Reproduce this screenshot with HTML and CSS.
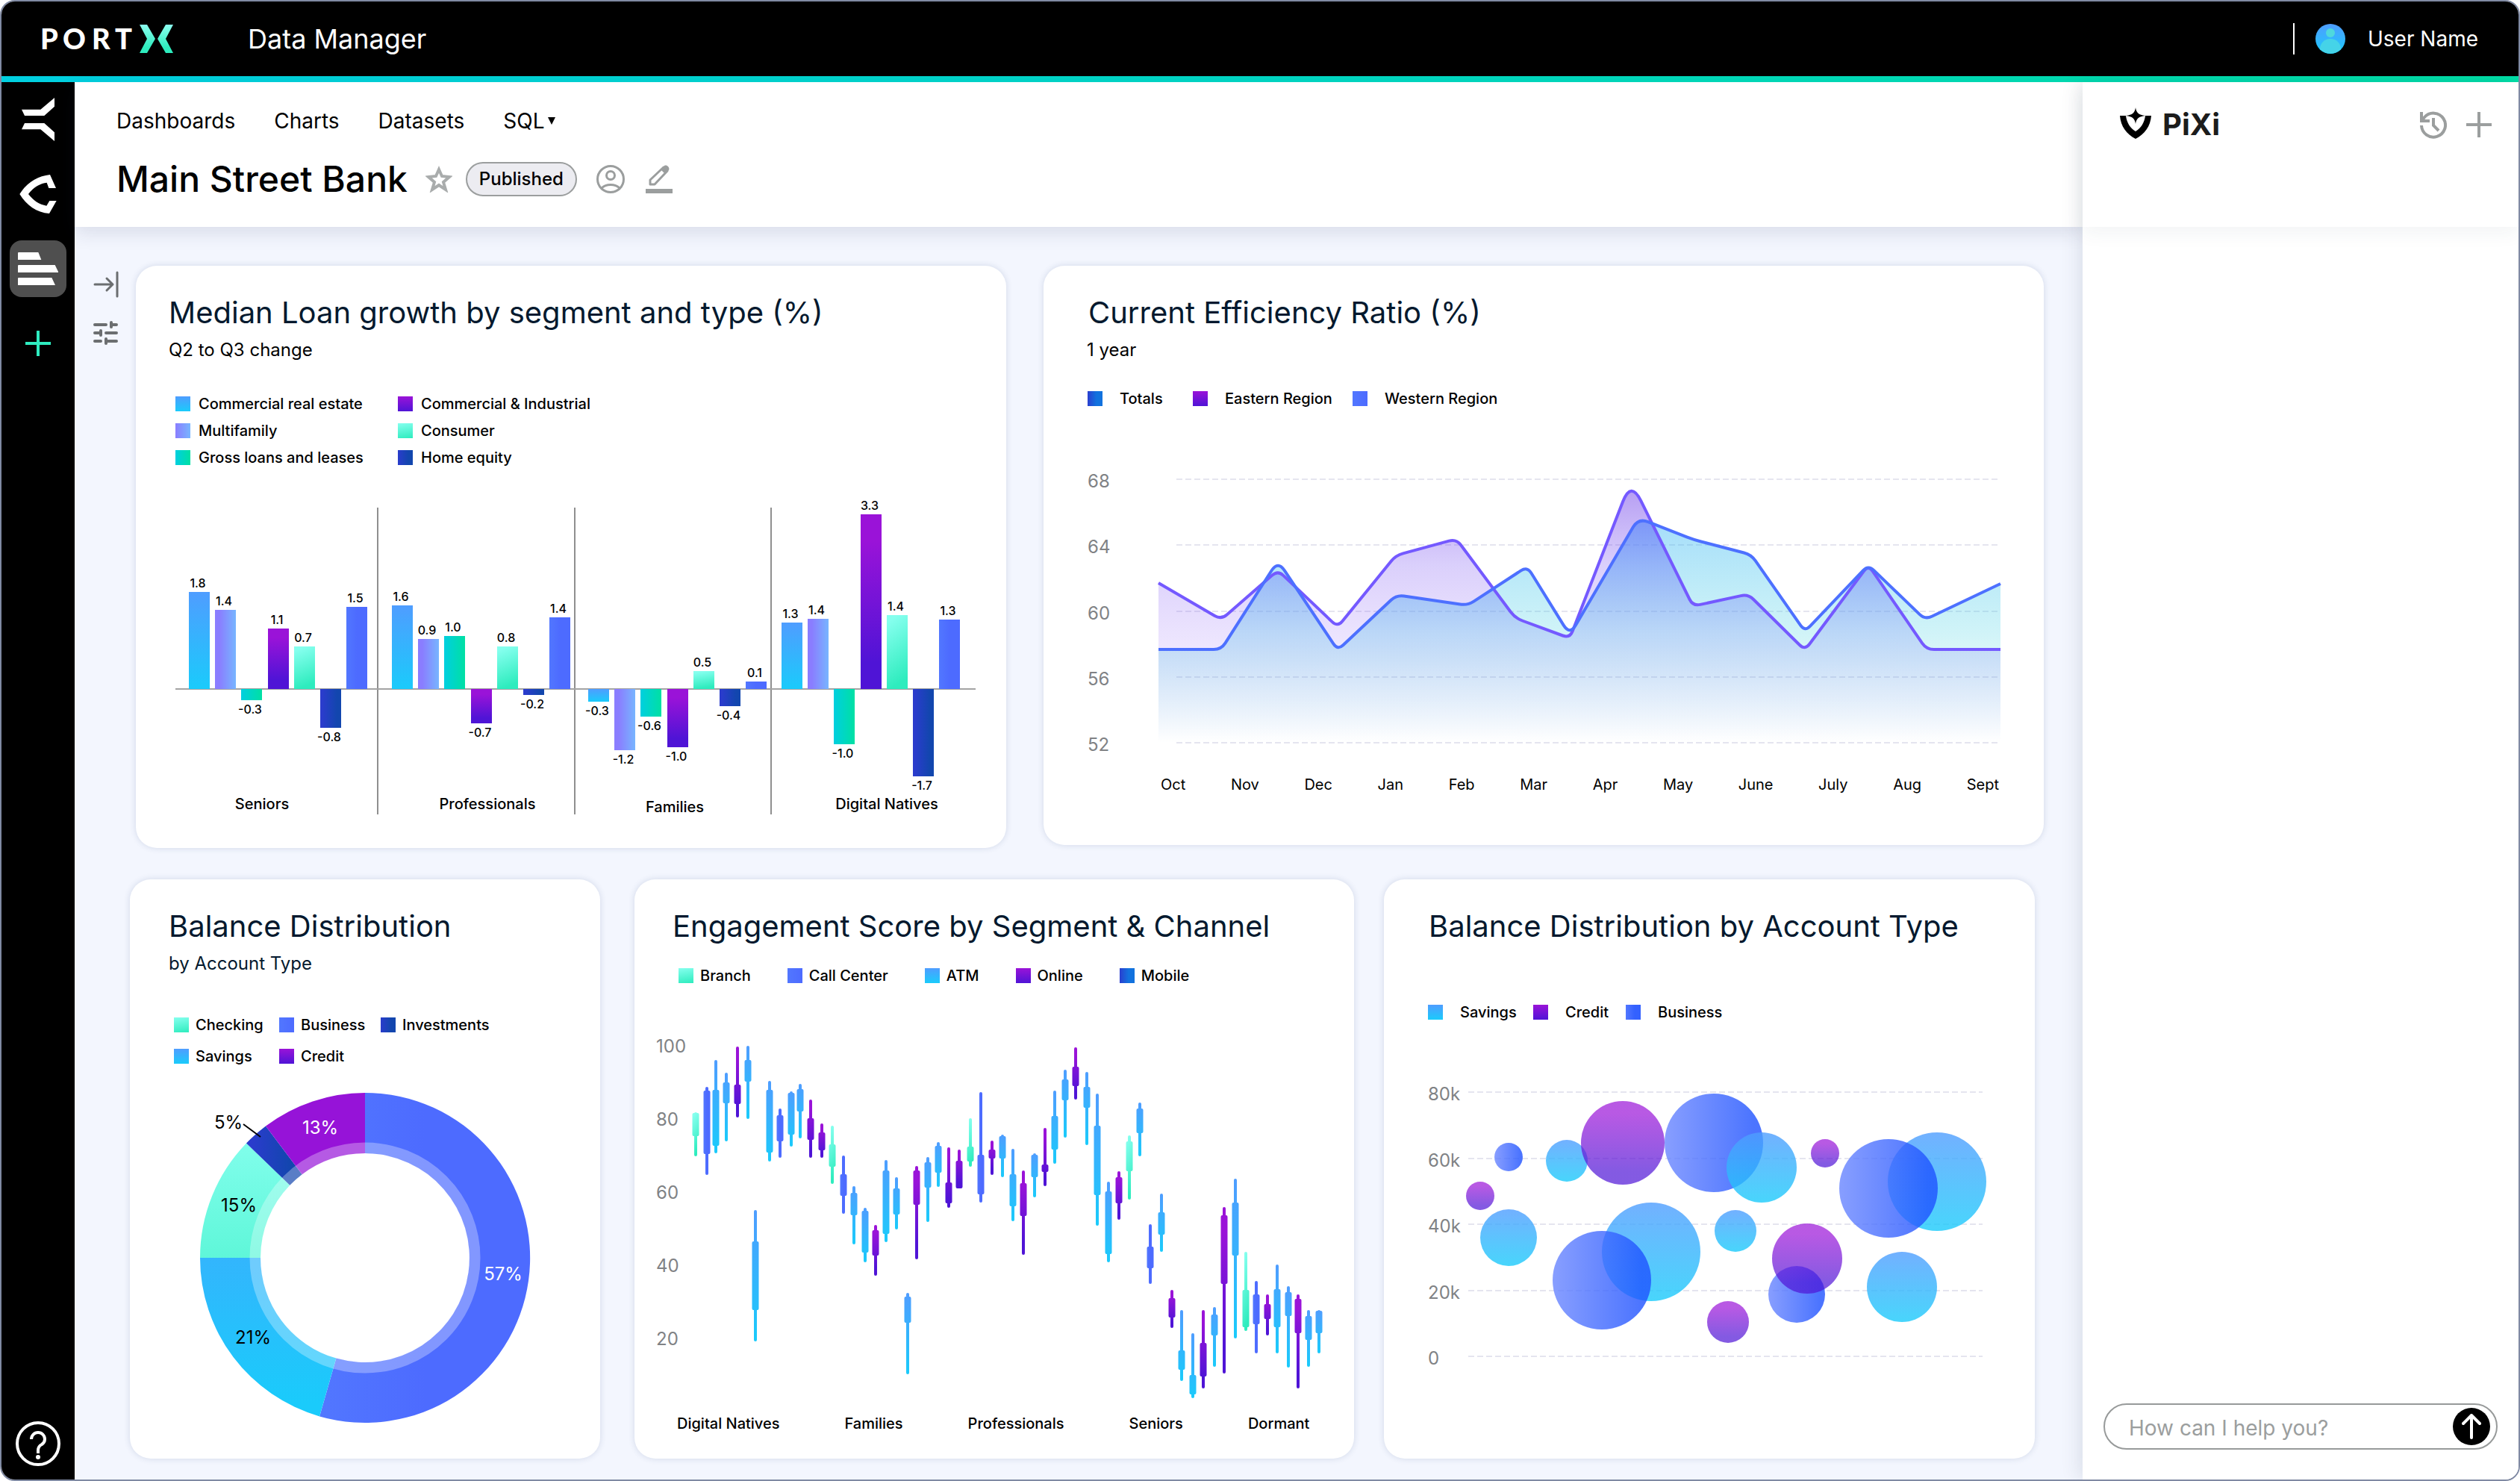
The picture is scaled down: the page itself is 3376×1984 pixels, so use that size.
FILE: index.html
```html
<!DOCTYPE html>
<html lang="en">
<head>
    <meta charset="UTF-8">
    <meta name="viewport" content="width=device-width, initial-scale=1.0">
    <title>PortX Data Manager</title>
    <link rel="stylesheet" href="styles.css">
</head>
<body>
    <!-- shared gradients for the charts -->
    <svg class="defs" width="0" height="0" aria-hidden="true">
        <defs>
            <linearGradient id="sky" x1="0" y1="0" x2="0" y2="1"><stop offset="0" stop-color="#4f9dff"/><stop offset="1" stop-color="#1acbfb"/></linearGradient>
            <linearGradient id="lilac"><stop offset="0.2" stop-color="#8a7dff"/><stop offset="1" stop-color="#77b5ff"/></linearGradient>
            <linearGradient id="teal"><stop offset="0" stop-color="#00cfe0"/><stop offset="1" stop-color="#00e0a3"/></linearGradient>
            <linearGradient id="purple" x1="0" y1="0" x2="0" y2="1"><stop offset="0.15" stop-color="#9a13d8"/><stop offset="0.85" stop-color="#4f14d6"/></linearGradient>
            <linearGradient id="mint" x1="0" y1="0" x2="0.2" y2="1"><stop offset="0.1" stop-color="#85ffee"/><stop offset="1" stop-color="#2eecbe"/></linearGradient>
            <linearGradient id="navy"><stop offset="0.1" stop-color="#2a3ccc"/><stop offset="0.8" stop-color="#1246ae"/></linearGradient>
            <linearGradient id="blue"><stop offset="0" stop-color="#5277ff"/><stop offset="0.5" stop-color="#4d6bff"/></linearGradient>
            <linearGradient id="bubble"><stop offset="0" stop-color="#6a86ff"/><stop offset="0.9" stop-color="#1f52ff"/></linearGradient>
            <linearGradient id="donutSky" gradientUnits="userSpaceOnUse" x1="0" y1="4" x2="0" y2="420"><stop offset="0" stop-color="#4f9dff"/><stop offset="1" stop-color="#1acbfb"/></linearGradient>
            <linearGradient id="donutMint" gradientUnits="userSpaceOnUse" x1="0" y1="50" x2="0" y2="446"><stop offset="0" stop-color="#85ffee"/><stop offset="1" stop-color="#2eecbe"/></linearGradient>
            <linearGradient id="areaEast" gradientUnits="userSpaceOnUse" x1="0" y1="32" x2="0" y2="371"><stop offset="0" stop-color="#6d3ce6" stop-opacity="0.5"/><stop offset="0.3" stop-color="#7c56f2" stop-opacity="0.28"/><stop offset="0.65" stop-color="#9668fa" stop-opacity="0.15"/><stop offset="1" stop-color="#9668fa" stop-opacity="0"/></linearGradient>
            <linearGradient id="areaWest" gradientUnits="userSpaceOnUse" x1="0" y1="72" x2="0" y2="371"><stop offset="0" stop-color="#3ab4f6" stop-opacity="0.46"/><stop offset="0.5" stop-color="#41d0e2" stop-opacity="0.25"/><stop offset="1" stop-color="#4bdcc8" stop-opacity="0"/></linearGradient>
            <linearGradient id="areaBoth" gradientUnits="userSpaceOnUse" x1="0" y1="72" x2="0" y2="371"><stop offset="0" stop-color="#6a50ff" stop-opacity="0.3"/><stop offset="0.5" stop-color="#7080ff" stop-opacity="0.08"/><stop offset="1" stop-color="#6480ff" stop-opacity="0"/></linearGradient>
        </defs>
    </svg>

    <div class="app">
        <header class="header">
            <svg class="logo" width="188" height="58" viewBox="46 20 188 58" role="img" aria-label="PortX">
                <defs>
                    <linearGradient id="logoX" x1="0" y1="0" x2="0" y2="1"><stop offset="0" stop-color="#8dfff0"/><stop offset="0.8" stop-color="#2eecbe"/></linearGradient>
                </defs>
                <text class="logo-text" x="54 84 123 154" y="63">PORT</text>
                <path fill="url(#logoX)" d="M187 30h10l11 19-11 19h-10l10-19zM232 30h-10l-11 19 11 19h10l-10-19z"/>
            </svg>
            <span class="app-name">Data Manager</span>
            <div class="user">
                <svg width="40" height="40" viewBox="0 0 40 40">
                    <circle cx="20" cy="20" r="20" fill="url(#sky)"/>
                    <circle cx="20" cy="12" r="6" fill="#4fd8dd"/>
                    <path d="M6 34c0-8 6-14 14-14s14 6 14 14a20 20 0 0 1-28 0z" fill="#45d3e8"/>
                </svg>
                <span>User Name</span>
            </div>
        </header>

        <div class="body">
            <aside class="sidebar">
                <button class="side-btn" aria-label="Connections">
                    <svg width="44" height="58" viewBox="0 0 132 174"><path fill="#fff" d="M132 0v35L91 72H12L0 47h76zM132 174v-35l-41-37H12L0 127h76z"/></svg>
                </button>
                <button class="side-btn" aria-label="Cores">
                    <svg width="50" height="52" viewBox="0 0 148 156"><path fill="#fff" d="M122 0C72 6 30 30 0 78c28 46 68 74 119 78l29-51h-28l-12 20C78 120 55 104 35 78c20-26 43-42 74-46l8 22h29z"/></svg>
                </button>
                <button class="side-btn active" aria-label="Data Manager">
                    <svg width="54" height="44" viewBox="0 0 162 132"><path fill="#fff" d="M2 0h80l12 30H0V2zM2 51h147l13 27v3H0V53zM2 102h134l14 30H0v-28z"/></svg>
                </button>
                <button class="side-btn" aria-label="Add">
                    <svg width="34" height="34" viewBox="0 0 34 34"><path d="M17 0v34M0 17h34" stroke="#2eecc0" stroke-width="4"/></svg>
                </button>
                <button class="side-btn help" aria-label="Help">
                    <svg width="60" height="60" viewBox="0 0 60 60" fill="none" stroke="#fff" stroke-width="4">
                        <circle cx="30" cy="30" r="28"/>
                        <path d="M21 24c0-5 4-9 9-9s9 4 9 9c0 3-1 5-4 7-4 2-5 4-5 8v4"/>
                        <circle cx="30" cy="48" r="3" fill="#fff" stroke="none"/>
                    </svg>
                </button>
            </aside>

            <main class="main">
                <div class="topbar">
                    <nav class="nav">
                        <a href="#">Dashboards</a>
                        <a href="#">Charts</a>
                        <a href="#">Datasets</a>
                        <button class="nav-menu">SQL<svg width="10" height="10" viewBox="0 0 10 10"><path d="M0 0h10L5 10z"/></svg></button>
                    </nav>
                    <div class="title-row">
                        <h1>Main Street Bank</h1>
                        <button class="icon-btn star" aria-label="Favorite">
                            <svg width="36" height="36" viewBox="0 0 36 36" fill="none" stroke="#a9acac" stroke-width="4"><path d="M18 5l4 9 10 1-8 7 3 10-9-6-9 6 3-10-8-7 10-1z"/></svg>
                        </button>
                        <span class="badge">Published</span>
                        <button class="icon-btn owner" aria-label="Owner">
                            <svg width="38" height="38" viewBox="0 0 38 38" fill="none" stroke="#9b9e9e" stroke-width="3"><circle cx="19" cy="19" r="17.500"/><circle cx="19" cy="14" r="5.500"/><path d="M7 31c6-6 18-6 24 0"/></svg>
                        </button>
                        <button class="icon-btn" aria-label="Edit">
                            <svg width="36" height="38" viewBox="0 0 36 38"><path d="M6 26v-6L24 3l5 5-17 18z" fill="none" stroke="#9b9e9e" stroke-width="3" stroke-linejoin="round"/><path d="M20 6l5-5c2-1 4 0 5 1s2 3 1 5l-5 5z" fill="#9b9e9e"/><path d="M0 32h36v6H0z" fill="#9b9e9e"/></svg>
                        </button>
                    </div>
                </div>

                <div class="content">
                    <div class="tools">
                        <button class="icon-btn" aria-label="Expand filters">
                            <svg width="36" height="36" viewBox="0 0 36 36" fill="none" stroke="#6b6e70" stroke-width="3" stroke-linecap="round" stroke-linejoin="round"><path d="M3 18h24M19 10l8 8-8 8M33 2v32"/></svg>
                        </button>
                        <button class="icon-btn" aria-label="Filter settings">
                            <svg width="36" height="36" viewBox="0 0 36 36" fill="none" stroke="#6b6e70" stroke-width="4" stroke-linecap="round"><path d="M3 7h15M25 4v6M25 7h7M3 18h8M11 15v6M18 18h14M3 29h8M18 26v6M18 29h14"/></svg>
                        </button>
                    </div>

                    <div class="rows">
                        <div class="row row-top">
                            <section class="card loan">
                                <h2>Median Loan growth by segment and type (%)</h2>
                                <p class="sub">Q2 to Q3 change</p>
                                <ul class="legend">
                                    <li><i class="sw sky"></i>Commercial real estate</li>
                                    <li><i class="sw purple"></i>Commercial &amp; Industrial</li>
                                    <li><i class="sw lilac"></i>Multifamily</li>
                                    <li><i class="sw mint"></i>Consumer</li>
                                    <li><i class="sw teal"></i>Gross loans and leases</li>
                                    <li><i class="sw navy"></i>Home equity</li>
                                </ul>
                                <svg class="chart" id="loanChart" viewBox="0 0 1166 440"></svg>
                            </section>

                            <section class="card ratio">
                                <h2>Current Efficiency Ratio (%)</h2>
                                <p class="sub">1 year</p>
                                <ul class="legend">
                                    <li><i class="sw royal"></i>Totals</li>
                                    <li><i class="sw purple"></i>Eastern Region</li>
                                    <li><i class="sw blue"></i>Western Region</li>
                                </ul>
                                <svg class="chart" id="ratioChart" viewBox="0 0 1340 400"></svg>
                                <div class="months">
                                    <span>Oct</span><span>Nov</span><span>Dec</span><span>Jan</span><span>Feb</span><span>Mar</span>
                                    <span>Apr</span><span>May</span><span>June</span><span>July</span><span>Aug</span><span>Sept</span>
                                </div>
                            </section>
                        </div>

                        <div class="row row-bottom">
                            <section class="card balance">
                                <h2>Balance Distribution</h2>
                                <p class="sub">by Account Type</p>
                                <ul class="legend">
                                    <li><i class="sw mint"></i>Checking</li>
                                    <li><i class="sw blue"></i>Business</li>
                                    <li><i class="sw navy"></i>Investments</li>
                                    <li><i class="sw sky"></i>Savings</li>
                                    <li><i class="sw purple"></i>Credit</li>
                                </ul>
                                <svg class="chart" id="donutChart" viewBox="0 0 630 460"></svg>
                            </section>

                            <section class="card engagement">
                                <h2>Engagement Score by Segment &amp; Channel</h2>
                                <ul class="legend">
                                    <li><i class="sw mint"></i>Branch</li>
                                    <li><i class="sw blue"></i>Call Center</li>
                                    <li><i class="sw sky"></i>ATM</li>
                                    <li><i class="sw purple"></i>Online</li>
                                    <li><i class="sw royal"></i>Mobile</li>
                                </ul>
                                <svg class="chart" id="scoreChart" viewBox="0 0 964 500"></svg>
                                <div class="segments">
                                    <span>Digital Natives</span><span>Families</span><span>Professionals</span><span>Seniors</span><span>Dormant</span>
                                </div>
                            </section>

                            <section class="card accounts">
                                <h2>Balance Distribution by Account Type</h2>
                                <ul class="legend">
                                    <li><i class="sw sky"></i>Savings</li>
                                    <li><i class="sw purple"></i>Credit</li>
                                    <li><i class="sw bright"></i>Business</li>
                                </ul>
                                <svg class="chart" id="bubbleChart" viewBox="0 0 872 380"></svg>
                            </section>
                        </div>
                    </div>
                </div>
            </main>

            <aside class="panel">
                <div class="panel-head">
                    <svg width="42" height="42" viewBox="0 0 42 42"><path d="M21 0c1 7 4 10 13 11-9 1-12 4-13 11-1-7-4-10-13-11 9-1 12-4 13-11z"/><path d="M0 11h8c1 9 6 17 13 21 7-4 12-12 13-21h8c-1 14-9 25-21 31C9 36 1 25 0 11z"/></svg>
                    <h3>PiXi</h3>
                    <button class="icon-btn history" aria-label="History">
                        <svg width="36" height="38" viewBox="0 0 36 38" fill="none" stroke="#9b9e9e" stroke-width="4"><path d="M2 20a16 16 0 1 0 4-11L3 13M2 2v12h11M18 10v10l7 7"/></svg>
                    </button>
                    <button class="icon-btn" aria-label="New chat">
                        <svg width="34" height="34" viewBox="0 0 34 34"><path d="M17 0v34M0 17h34" stroke="#9b9e9e" stroke-width="4"/></svg>
                    </button>
                </div>
                <form class="ask">
                    <input type="text" aria-label="Message" placeholder="How can I help you?">
                    <button type="button" aria-label="Send">
                        <svg width="26" height="34" viewBox="0 0 26 34" fill="none" stroke="#fff" stroke-width="4" stroke-linecap="round" stroke-linejoin="round"><path d="M13 32V2M2 13L13 2l11 11"/></svg>
                    </button>
                </form>
            </aside>
        </div>
    </div>

    <script src="charts.js"></script>
</body>
</html>
```

FILE: styles.css
```css
* {
    box-sizing: border-box;
}
body {
    margin: 0;
    background-color: #fff;
    color: #000;
    font-family: Inter, "Liberation Sans", sans-serif;
    font-size: 28px;
}
h1, h2, h3, p, ul {
    margin: 0;
    padding: 0;
    font-weight: 400;
}
button {
    border: none;
    background: none;
    padding: 0;
    color: inherit;
    font: inherit;
    cursor: pointer;
}
svg {
    display: block;
}
.defs {
    position: absolute;
}
.app {
    display: flex;
    flex-direction: column;
    min-height: 100vh;
    border: 2px solid #808aa3;
    border-radius: 20px;
    overflow: hidden;
}

/* header */
.header {
    display: flex;
    align-items: center;
    height: 108px;
    padding: 0 54px 8px 44px;
    background: linear-gradient(90deg, #00cfe0, #00e0a8) bottom / 100% 8px no-repeat #000;
    color: #fff;
}
.logo-text {
    font-family: Lato, sans-serif;
    font-size: 38px;
    font-weight: 900;
    fill: #fff;
}
.app-name {
    margin-left: 98px;
    font-size: 36px;
}
.user {
    display: flex;
    align-items: center;
    height: 42px;
    margin-left: auto;
    padding-left: 28px;
    border-left: 2px solid #fff;
}
.user span {
    margin-left: 30px;
}

.body {
    display: flex;
    flex: 1;
}

/* sidebar */
.sidebar {
    display: flex;
    flex-direction: column;
    align-items: center;
    gap: 24px;
    width: 98px;
    padding: 12px 0 10px;
    background-color: #000;
}
.side-btn {
    display: flex;
    align-items: center;
    justify-content: center;
    width: 76px;
    height: 76px;
    border-radius: 16px;
}
.side-btn.active {
    background-color: #4f4f4f;
}
.help {
    margin-top: auto;
}

/* main */
.main {
    display: flex;
    flex-direction: column;
    flex: 1;
    min-width: 0;
    background-color: #f3f6fe;
}
.topbar {
    position: relative;
    height: 194px;
    padding: 34px 56px 0;
    background-color: #fff;
    box-shadow: 0 8px 24px rgba(30, 40, 80, 0.12);
}
.nav {
    display: flex;
    gap: 52px;
    line-height: 36px;
}
.nav a {
    color: #000;
    text-decoration: none;
}
.nav-menu {
    display: flex;
    align-items: center;
    gap: 4px;
}
.title-row {
    display: flex;
    align-items: center;
    margin-top: 30px;
}
h1 {
    font-size: 48px;
    font-weight: 500;
    line-height: 60px;
}
.star {
    margin: 0 18px 0 24px;
}
.badge {
    padding: 0 16px;
    border: 2px solid #9b9e9e;
    border-radius: 23px;
    background-color: #ececf1;
    font-size: 24px;
    font-weight: 500;
    line-height: 42px;
}
.owner {
    margin: 0 28px 0 26px;
}

.content {
    display: flex;
    flex: 1;
}
.tools {
    display: flex;
    flex-direction: column;
    gap: 29px;
    width: 74px;
    padding: 59px 0 0 24px;
}
.rows {
    display: grid;
    flex: 1;
    grid-template-rows: 780fr 776fr;
    gap: 42px;
    min-width: 0;
    padding: 52px 0 28px;
}
.row {
    display: grid;
}
.row-top {
    grid-template-columns: 1166fr 1340fr;
    gap: 50px;
    padding: 0 52px 0 8px;
}
.row-bottom {
    grid-template-columns: 630fr 970fr 872fr;
    gap: 40px;
    padding-right: 64px;
}
.card {
    min-width: 0;
    padding-top: 39px;
    border-radius: 28px;
    background-color: #fff;
    box-shadow: 0 0 8px rgba(40, 60, 120, 0.16);
}
.card h2, .sub {
    padding-left: 44px;
}
.card h2 {
    color: #04192e;
    font-size: 40px;
    line-height: 48px;
}
.sub {
    margin-top: 10px;
    font-size: 24px;
    line-height: 32px;
}
.legend {
    display: grid;
    list-style: none;
    font-size: 20px;
    font-weight: 500;
    line-height: 20px;
}
.legend li {
    display: flex;
    gap: 9px;
    white-space: nowrap;
}
.sw {
    width: 20px;
    height: 20px;
}
.sky { background: linear-gradient(#4f9dff, #1acbfb); }
.lilac { background: linear-gradient(90deg, #8a7dff, #77b5ff); }
.teal { background: linear-gradient(90deg, #00cfe0, #00e0a3); }
.purple { background: linear-gradient(#9a13d8, #4f14d6); }
.mint { background: linear-gradient(170deg, #85ffee, #2eecbe); }
.navy { background: linear-gradient(90deg, #2a3ccc, #1246ae 70%); }
.blue { background: linear-gradient(90deg, #5277ff, #4d6bff); }
.royal { background: linear-gradient(90deg, #2a3fd0, #1272de 60%); }
.bright { background: linear-gradient(90deg, #5277ff, #3361ff 60%); }

.chart {
    width: 100%;
    height: auto;
    overflow: visible;
}
.tick {
    fill: #808285;
    font-size: 24px;
}
.grid-line {
    stroke: #e5e5ef;
    stroke-width: 2;
    stroke-dasharray: 8 4;
}
.bar-value {
    font-size: 16px;
    font-weight: 500;
    text-anchor: middle;
}
.group-name {
    font-size: 20px;
    font-weight: 500;
    text-anchor: middle;
}
.slice-value {
    font-size: 24px;
    text-anchor: middle;
}

.loan .legend {
    grid-template-columns: 298px auto;
    justify-content: start;
    row-gap: 16px;
    margin: 46px 0 37px 53px;
}
.loan .legend li {
    gap: 11px;
}

.ratio {
    margin-bottom: 4px;
}
.ratio h2 {
    padding-left: 60px;
}
.ratio .sub {
    padding-left: 58px;
}
.ratio .legend {
    grid-template-columns: 141px 214px auto;
    justify-content: start;
    margin: 39px 0 80px 59px;
}
.ratio .legend li, .accounts .legend li {
    gap: 23px;
}
.months {
    display: flex;
    justify-content: space-between;
    margin-top: 15px;
    padding: 0 60px 0 157px;
    font-size: 20px;
    line-height: 24px;
}

.balance h2, .balance .sub {
    padding-left: 52px;
}
.balance .sub {
    color: #04192e;
}
.balance .legend {
    grid-template-columns: 141px 136px auto;
    justify-content: start;
    row-gap: 22px;
    margin: 56px 0 35px 59px;
}

.engagement {
    margin-left: 6px;
}
.engagement h2 {
    padding-left: 51px;
}
.engagement .legend {
    display: flex;
    gap: 49px;
    margin: 32px 0 63px 59px;
}
.segments {
    display: flex;
    gap: 87px;
    margin-top: 15px;
    padding-left: 57px;
    font-size: 20px;
    font-weight: 500;
    line-height: 24px;
}

.accounts h2 {
    padding-left: 60px;
}
.accounts .legend {
    grid-template-columns: 141px 124px auto;
    justify-content: start;
    margin: 81px 0 94px 59px;
}

/* assistant panel */
.panel {
    position: relative;
    display: flex;
    flex-direction: column;
    width: 584px;
    background-color: #fff;
    box-shadow: -4px 0 24px rgba(30, 50, 70, 0.12);
}
.panel-head {
    display: flex;
    align-items: flex-start;
    height: 194px;
    padding: 34px 36px 0 50px;
    box-shadow: 0 8px 24px rgba(30, 60, 80, 0.06);
}
h3 {
    margin: 1px auto 0 15px;
    color: #1c1c1c;
    font-size: 40px;
    font-weight: 700;
    line-height: 44px;
}
.panel-head .icon-btn {
    margin-top: 6px;
}
.panel-head .history {
    margin: 4px 26px 0 0;
}
.ask {
    display: flex;
    align-items: center;
    height: 62px;
    margin: auto 28px 40px;
    padding-right: 8px;
    border: 2px solid #979a9a;
    border-radius: 31px;
}
.ask input {
    flex: 1;
    min-width: 0;
    height: 100%;
    padding: 4px 0 0 32px;
    border: none;
    outline: none;
    background: none;
    font: inherit;
}
.ask input::placeholder {
    color: #9b9e9e;
}
.ask button {
    display: flex;
    align-items: center;
    justify-content: center;
    width: 50px;
    height: 50px;
    border-radius: 50%;
    background-color: #000;
}
```

FILE: charts.js
```javascript
function add(svg, name, attrs, text) {
    const el = document.createElementNS('http://www.w3.org/2000/svg', name);
    for (const key in attrs) {
        el.setAttribute(key, attrs[key]);
    }
    if (text !== undefined) {
        el.textContent = text;
    }
    svg.appendChild(el);
    return el;
}

// y axis labels with optional dashed lines
function drawTicks(svg, labels, x, first, step, line) {
    labels.forEach((label, i) => {
        const y = Math.round(first + i * step);
        if (line) {
            add(svg, 'line', { class: 'grid-line', x1: line[0], x2: line[1], y1: y - 11, y2: y - 11 });
        }
        add(svg, 'text', { class: 'tick', x: x, y: y }, label);
    });
}

// --- loan growth bars ---
const loan = document.getElementById('loanChart');
const loanColors = ['sky', 'lilac', 'teal', 'purple', 'mint', 'navy', 'blue'];
const loanGroups = [
    { name: 'Seniors', x: 71, labelX: 169, labelY: 424, values: ['1.8', '1.4', '-0.3', '1.1', '0.7', '-0.8', '1.5'], sizes: [130, 106, -15, 81, 57, -52, 110] },
    { name: 'Professionals', x: 343, labelX: 471, labelY: 424, values: ['1.6', '0.9', '1.0', '-0.7', '0.8', '-0.2', '1.4'], sizes: [112, 67, 71, -46, 57, -8, 96] },
    { name: 'Families', x: 606, labelX: 722, labelY: 428, values: ['-0.3', '-1.2', '-0.6', '-1.0', '0.5', '-0.4', '0.1'], sizes: [-17, -82, -37, -78, 24, -23, 10] },
    { name: 'Digital Natives', x: 865, labelX: 1006, labelY: 424, values: ['1.3', '1.4', '-1.0', '3.3', '1.4', '-1.7', '1.3'], sizes: [89, 94, -74, 234, 99, -117, 93] }
];
const zero = 263;
[324, 588, 851].forEach(x => add(loan, 'line', { x1: x, x2: x, y1: 20, y2: 431, stroke: '#8f8f8f', 'stroke-width': 2 }));
add(loan, 'line', { x1: 53, x2: 1125, y1: zero, y2: zero, stroke: '#a3a3a3', 'stroke-width': 2 });
loanGroups.forEach(group => {
    group.sizes.forEach((size, i) => {
        const x = Math.round(group.x + i * 35.2);
        add(loan, 'rect', { x: x, y: size > 0 ? zero - size : zero, width: 28, height: Math.abs(size), fill: 'url(#' + loanColors[i] + ')' });
        add(loan, 'text', { class: 'bar-value', x: x + 12, y: size > 0 ? zero - size - 6 : zero - size + 18 }, group.values[i]);
    });
    add(loan, 'text', { class: 'group-name', x: group.labelX, y: group.labelY }, group.name);
});

// --- efficiency ratio lines, third value is the corner size ---
const ratio = document.getElementById('ratioChart');
const east = [[154, 157], [238, 206], [314, 140], [394, 216], [472, 120], [553, 98], [632, 204], [705, 231], [787, 20, 30], [870, 188], [944, 172], [1020, 247], [1105, 133], [1183, 246], [1282, 246]];
const west = [[154, 246], [238, 246], [314, 127, 16], [394, 247], [473, 173], [568, 187], [648, 135], [705, 227, 16], [797, 70, 14], [871, 99], [948, 119], [1020, 222], [1105, 133], [1181, 206], [1282, 158]];

function roundedPath(points) {
    let d = 'M' + points[0][0] + ' ' + points[0][1];
    for (let i = 1; i < points.length - 1; i++) {
        const [x, y, r = 10] = points[i];
        const toward = p => {
            const len = Math.hypot(p[0] - x, p[1] - y);
            return (x + (p[0] - x) * r / len).toFixed(1) + ' ' + (y + (p[1] - y) * r / len).toFixed(1);
        };
        d += 'L' + toward(points[i - 1]) + 'Q' + x + ' ' + y + ' ' + toward(points[i + 1]);
    }
    const last = points[points.length - 1];
    return d + 'L' + last[0] + ' ' + last[1];
}

drawTicks(ratio, ['68', '64', '60', '56', '52'], 59, 29, 88.3, [178, 1282]);
const eastArea = roundedPath(east) + 'V371H154Z';
const westArea = roundedPath(west) + 'V371H154Z';
const clip = add(ratio, 'clipPath', { id: 'eastClip' });
add(clip, 'path', { d: eastArea });
add(ratio, 'path', { d: eastArea, fill: 'url(#areaEast)' });
add(ratio, 'path', { d: westArea, fill: 'url(#areaWest)' });
add(ratio, 'path', { d: westArea, fill: 'url(#areaBoth)', 'clip-path': 'url(#eastClip)' });
add(ratio, 'path', { d: roundedPath(east), fill: 'none', stroke: '#7459ff', 'stroke-width': 4 });
add(ratio, 'path', { d: roundedPath(west), fill: 'none', stroke: '#4d70ff', 'stroke-width': 4 });

// --- balance donut, angles in degrees from the top ---
const donut = document.getElementById('donutChart');
const cx = 315, cy = 225;
const slices = [
    { from: 0, to: 196, fill: 'url(#blue)', label: '57%', x: 500, y: 255, color: '#fff' },
    { from: 196, to: 270, fill: 'url(#donutSky)', label: '21%', x: 165, y: 340, color: '#000' },
    { from: 270, to: 314, fill: 'url(#donutMint)', label: '15%', x: 146, y: 163, color: '#000' },
    { from: 314, to: 323, fill: 'url(#navy)', label: '5%', x: 132, y: 52, color: '#000' },
    { from: 323, to: 360, fill: '#9613d8', label: '13%', x: 255, y: 59, color: '#fff' }
];

function polar(r, deg) {
    const a = deg * Math.PI / 180;
    return (cx + r * Math.sin(a)).toFixed(1) + ' ' + (cy - r * Math.cos(a)).toFixed(1);
}

slices.forEach(s => {
    const large = s.to - s.from > 180 ? 1 : 0;
    add(donut, 'path', {
        d: 'M' + polar(221, s.from) + 'A221 221 0 ' + large + ' 1 ' + polar(221, s.to) + 'L' + polar(140, s.to) + 'A140 140 0 ' + large + ' 0 ' + polar(140, s.from) + 'Z',
        fill: s.fill
    });
});
add(donut, 'circle', { cx: cx, cy: cy, r: 147, fill: 'none', stroke: '#fff', 'stroke-opacity': 0.3, 'stroke-width': 15 });
add(donut, 'path', { d: 'M152 46l23 17', stroke: '#000', 'stroke-width': 2 });
slices.forEach(s => add(donut, 'text', { class: 'slice-value', x: s.x, y: s.y, fill: s.color }, s.label));

// --- engagement candles: x, wick top, wick bottom, body top, body bottom, color ---
const score = document.getElementById('scoreChart');
const colors = { g: 'mint', b: 'blue', c: 'sky', p: 'purple' };
const candles = [
    [82, 110, 169, 111, 142, 'g'], [97, 76, 194, 81, 166, 'b'], [109, 40, 165, 80, 155, 'c'], [123, 57, 149, 70, 98, 'c'],
    [138, 22, 117, 73, 99, 'p'], [152, 21, 119, 40, 69, 'c'], [162, 241, 417, 283, 375, 'c'], [181, 68, 176, 80, 164, 'c'],
    [195, 105, 171, 114, 149, 'b'], [210, 82, 156, 84, 140, 'c'], [222, 72, 145, 79, 109, 'c'], [236, 93, 171, 118, 147, 'p'],
    [251, 125, 171, 137, 161, 'p'], [265, 128, 206, 153, 183, 'g'], [280, 168, 246, 193, 222, 'b'], [294, 209, 287, 218, 248, 'c'],
    [309, 238, 311, 242, 298, 'c'], [323, 261, 329, 268, 302, 'p'], [337, 174, 284, 188, 273, 'c'], [351, 197, 267, 212, 247, 'c'],
    [366, 352, 461, 357, 392, 'c'], [378, 182, 307, 188, 234, 'p'], [393, 170, 257, 177, 211, 'c'], [407, 150, 210, 155, 191, 'c'],
    [421, 157, 238, 204, 232, 'p'], [435, 160, 212, 175, 212, 'p'], [450, 118, 183, 156, 176, 'g'], [464, 83, 231, 167, 220, 'b'],
    [479, 148, 194, 160, 172, 'p'], [493, 140, 197, 142, 172, 'c'], [507, 159, 256, 193, 236, 'c'], [521, 188, 301, 205, 249, 'p'],
    [536, 165, 224, 167, 197, 'c'], [550, 131, 209, 180, 190, 'p'], [563, 81, 179, 115, 160, 'c'], [577, 53, 144, 66, 94, 'c'],
    [591, 23, 93, 49, 75, 'p'], [606, 56, 154, 76, 104, 'c'], [620, 85, 262, 128, 221, 'c'], [635, 203, 311, 216, 300, 'c'],
    [649, 189, 254, 197, 232, 'p'], [663, 141, 227, 149, 189, 'g'], [677, 97, 169, 105, 138, 'c'], [691, 260, 340, 290, 319, 'b'],
    [706, 219, 297, 244, 274, 'c'], [720, 348, 399, 359, 385, 'p'], [733, 375, 470, 429, 455, 'c'], [748, 406, 493, 462, 488, 'c'],
    [762, 375, 480, 419, 464, 'p'], [777, 371, 451, 381, 409, 'c'], [790, 237, 460, 248, 340, 'p'], [805, 199, 413, 231, 302, 'c'],
    [819, 297, 403, 348, 398, 'g'], [833, 336, 433, 354, 394, 'b'], [848, 354, 409, 367, 387, 'p'], [861, 314, 433, 347, 398, 'c'],
    [876, 343, 452, 351, 383, 'c'], [889, 354, 480, 360, 406, 'p'], [903, 375, 451, 383, 415, 'c'], [917, 375, 433, 376, 406, 'c']
];

function bar(x, top, bottom, w) {
    return 'M' + (x - w / 2) + ' ' + (top + 2) + 'q0-2 2-2h' + (w - 4) + 'q2 0 2 2V' + (bottom - 2) + 'q0 2-2 2h-' + (w - 4) + 'q-2 0-2-2z';
}

drawTicks(score, ['100', '80', '60', '40', '20'], 29, 30, 98);
candles.forEach(([x, top, bottom, bodyTop, bodyBottom, color]) => {
    add(score, 'path', { d: bar(x, top, bottom, 4) + bar(x, bodyTop, bodyBottom, 9), fill: 'url(#' + colors[color] + ')' });
});

// --- account type bubbles: x, y, radius, color ---
const bubbles = document.getElementById('bubbleChart');
drawTicks(bubbles, ['80k', '60k', '40k', '20k', '0'], 59, 14, 88.5, [113, 802]);
[
    [167, 90, 19, 'bubble'], [245, 95, 28, 'sky'], [320, 71, 56, 'purple'], [442, 71, 66, 'bubble'], [506, 104, 47, 'sky'],
    [591, 85, 19, 'purple'], [741, 123, 66, 'sky'], [676, 132, 66, 'bubble'], [129, 142, 19, 'purple'], [167, 198, 38, 'sky'],
    [358, 217, 66, 'sky'], [292, 255, 66, 'bubble'], [471, 189, 28, 'sky'], [553, 274, 38, 'bubble'], [567, 226, 47, 'purple'],
    [694, 264, 47, 'sky'], [461, 311, 28, 'purple']
].forEach(([x, y, r, color]) => {
    add(bubbles, 'circle', { cx: x, cy: y, r: r, fill: 'url(#' + color + ')', 'fill-opacity': color === 'purple' ? 0.7 : 0.8 });
});
```
